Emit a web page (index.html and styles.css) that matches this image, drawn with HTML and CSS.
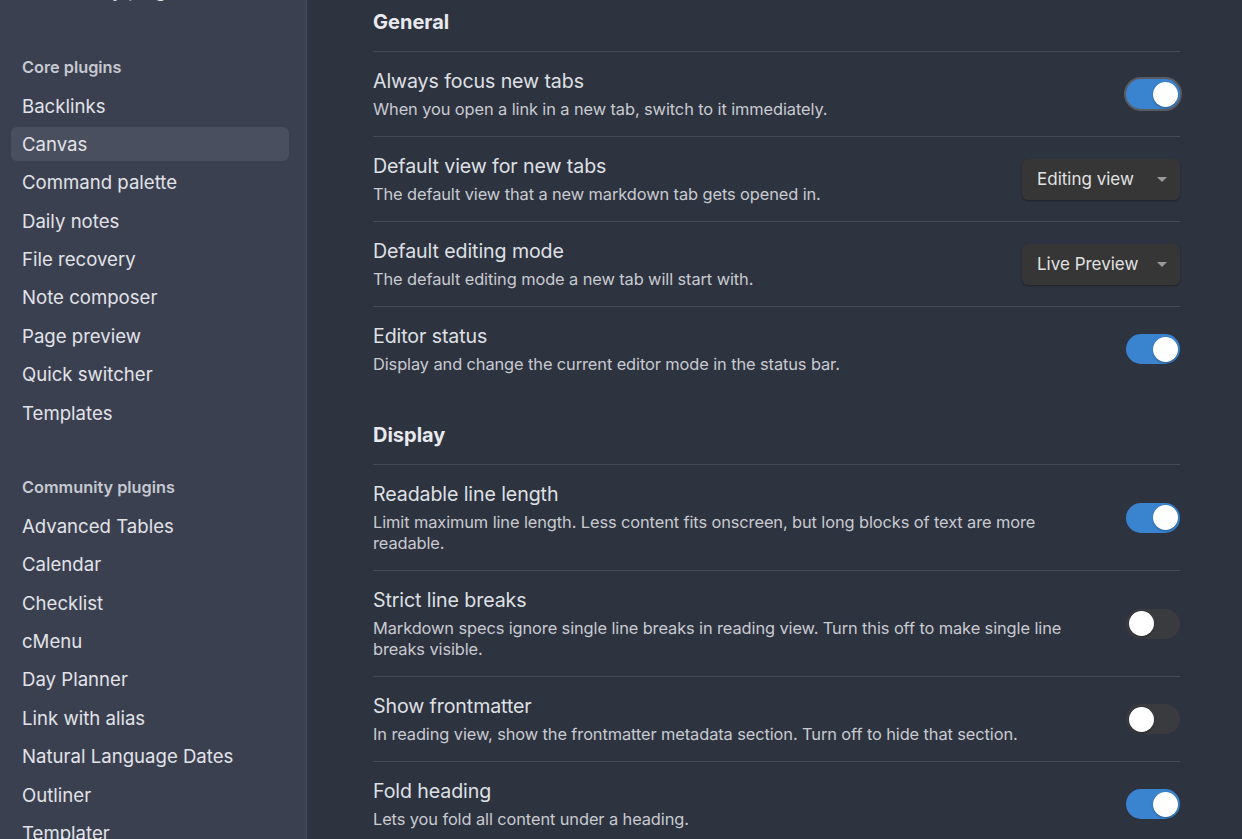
FILE: index.html
```html
<!DOCTYPE html>
<html lang="en">
<head>
<meta charset="utf-8">
<title>Settings</title>
<link rel="stylesheet" href="styles.css">
</head>
<body>
<div class="app">
  <nav class="sidebar">
    <div class="nav-group nav-group-first">
      <div class="nav-item">Community plugins</div>
    </div>
    <div class="nav-group">
      <div class="nav-heading">Core plugins</div>
      <div class="nav-item">Backlinks</div>
      <div class="nav-item is-active">Canvas</div>
      <div class="nav-item">Command palette</div>
      <div class="nav-item">Daily notes</div>
      <div class="nav-item">File recovery</div>
      <div class="nav-item">Note composer</div>
      <div class="nav-item">Page preview</div>
      <div class="nav-item">Quick switcher</div>
      <div class="nav-item">Templates</div>
    </div>
    <div class="nav-group">
      <div class="nav-heading">Community plugins</div>
      <div class="nav-item">Advanced Tables</div>
      <div class="nav-item">Calendar</div>
      <div class="nav-item">Checklist</div>
      <div class="nav-item">cMenu</div>
      <div class="nav-item">Day Planner</div>
      <div class="nav-item">Link with alias</div>
      <div class="nav-item">Natural Language Dates</div>
      <div class="nav-item">Outliner</div>
      <div class="nav-item">Templater</div>
    </div>
  </nav>
  <main class="content">
    <section class="section section-first">
      <h2 class="section-heading">General</h2>
      <div class="setting">
        <div class="setting-info">
          <div class="setting-name">Always focus new tabs</div>
          <div class="setting-desc">When you open a link in a new tab, switch to it immediately.</div>
        </div>
        <div class="toggle is-on is-focused"><span class="knob"></span></div>
      </div>
      <div class="setting">
        <div class="setting-info">
          <div class="setting-name">Default view for new tabs</div>
          <div class="setting-desc">The default view that a new markdown tab gets opened in.</div>
        </div>
        <div class="dropdown"><span>Editing view</span><span class="caret"></span></div>
      </div>
      <div class="setting">
        <div class="setting-info">
          <div class="setting-name">Default editing mode</div>
          <div class="setting-desc">The default editing mode a new tab will start with.</div>
        </div>
        <div class="dropdown"><span>Live Preview</span><span class="caret"></span></div>
      </div>
      <div class="setting">
        <div class="setting-info">
          <div class="setting-name">Editor status</div>
          <div class="setting-desc">Display and change the current editor mode in the status bar.</div>
        </div>
        <div class="toggle is-on"><span class="knob"></span></div>
      </div>
    </section>
    <section class="section">
      <h2 class="section-heading">Display</h2>
      <div class="setting">
        <div class="setting-info">
          <div class="setting-name">Readable line length</div>
          <div class="setting-desc">Limit maximum line length. Less content fits onscreen, but long blocks of text are more readable.</div>
        </div>
        <div class="toggle is-on"><span class="knob"></span></div>
      </div>
      <div class="setting">
        <div class="setting-info">
          <div class="setting-name">Strict line breaks</div>
          <div class="setting-desc">Markdown specs ignore single line breaks in reading view. Turn this off to make single line breaks visible.</div>
        </div>
        <div class="toggle"><span class="knob"></span></div>
      </div>
      <div class="setting">
        <div class="setting-info">
          <div class="setting-name">Show frontmatter</div>
          <div class="setting-desc">In reading view, show the frontmatter metadata section. Turn off to hide that section.</div>
        </div>
        <div class="toggle"><span class="knob"></span></div>
      </div>
      <div class="setting">
        <div class="setting-info">
          <div class="setting-name">Fold heading</div>
          <div class="setting-desc">Lets you fold all content under a heading.</div>
        </div>
        <div class="toggle is-on"><span class="knob"></span></div>
      </div>
    </section>
  </main>
</div>
</body>
</html>
```

FILE: styles.css
```css
* { box-sizing: border-box; }

html, body {
  margin: 0;
  padding: 0;
  height: 100%;
  overflow: hidden;
}

body {
  font-family: Inter, "Noto Sans", "Liberation Sans", sans-serif;
  background: #2e3340;
  color: #dcdde1;
}

.app {
  display: flex;
  height: 839px;
  overflow: hidden;
}

/* Sidebar */
.sidebar {
  width: 307px;
  flex: none;
  background: #3b4050;
  border-right: 1px solid #464b59;
  padding: 0 17px 0 11px;
  display: flex;
  flex-direction: column;
  overflow: hidden;
}

.nav-group {
  display: flex;
  flex-direction: column;
  margin-top: 36.6px;
}

.nav-group-first {
  margin-top: -29px;
  margin-bottom: 2px;
}

.nav-heading {
  height: 38.4px;
  line-height: 38.4px;
  padding-left: 11px;
  font-size: 16.3px;
  font-weight: 600;
  color: #c6c9d1;
}

.nav-item {
  height: 34px;
  line-height: 34px;
  margin: 2.2px 0;
  padding-left: 11px;
  font-size: 18.6px;
  color: #e1e3e8;
  border-radius: 6px;
  white-space: nowrap;
}

.nav-item.is-active {
  background: #4a4f5f;
}

/* Content */
.content {
  flex: 1;
  padding: 0 62px 0 66px;
  overflow: hidden;
}

.section {
  margin-top: 22px;
}

.section-first {
  margin-top: 0;
}

.section-heading {
  margin: 0;
  padding: 10px 0 17px;
  line-height: 24px;
  font-size: 20px;
  font-weight: 700;
  color: #e9eaed;
  border-bottom: 1px solid #454a57;
}

.setting {
  display: flex;
  align-items: center;
  gap: 40px;
  padding: 16px 0 16px;
  border-bottom: 1px solid #454a57;
}

.setting:last-child {
  border-bottom: none;
}

.setting-info {
  flex: 1;
  min-width: 0;
}

.setting-name {
  font-size: 19.6px;
  line-height: 26px;
  color: #dfe0e4;
  letter-spacing: -0.1px;
}

.setting-desc {
  margin-top: 5px;
  font-size: 16.4px;
  line-height: 21px;
  color: #c8cbd0;
  letter-spacing: -0.1px;
}

/* Toggle */
.toggle {
  flex: none;
  position: relative;
  width: 54px;
  height: 30px;
  border-radius: 15px;
  background: #3a3b3f;
}

.toggle.is-on {
  background: #3a83cf;
}

.toggle.is-focused {
  box-shadow: 0 0 0 2px #595c63;
}

.knob {
  position: absolute;
  top: 2.5px;
  left: 2.5px;
  width: 25px;
  height: 25px;
  border-radius: 50%;
  background: #ffffff;
  box-shadow: 0 1px 2px rgba(0, 0, 0, 0.3);
}

.toggle.is-on .knob {
  left: 26.5px;
}

/* Dropdown */
.dropdown {
  flex: none;
  width: 158px;
  height: 41px;
  border-radius: 6px;
  background: #363636;
  box-shadow: 0 1px 2px rgba(0, 0, 0, 0.35);
  display: flex;
  align-items: center;
  justify-content: space-between;
  padding: 0 13px 0 15px;
  font-size: 17px;
  color: #e2e2e2;
}

.caret {
  width: 0;
  height: 0;
  border-left: 5.5px solid transparent;
  border-right: 5.5px solid transparent;
  border-top: 5.5px solid #9a9a9a;
}
```
